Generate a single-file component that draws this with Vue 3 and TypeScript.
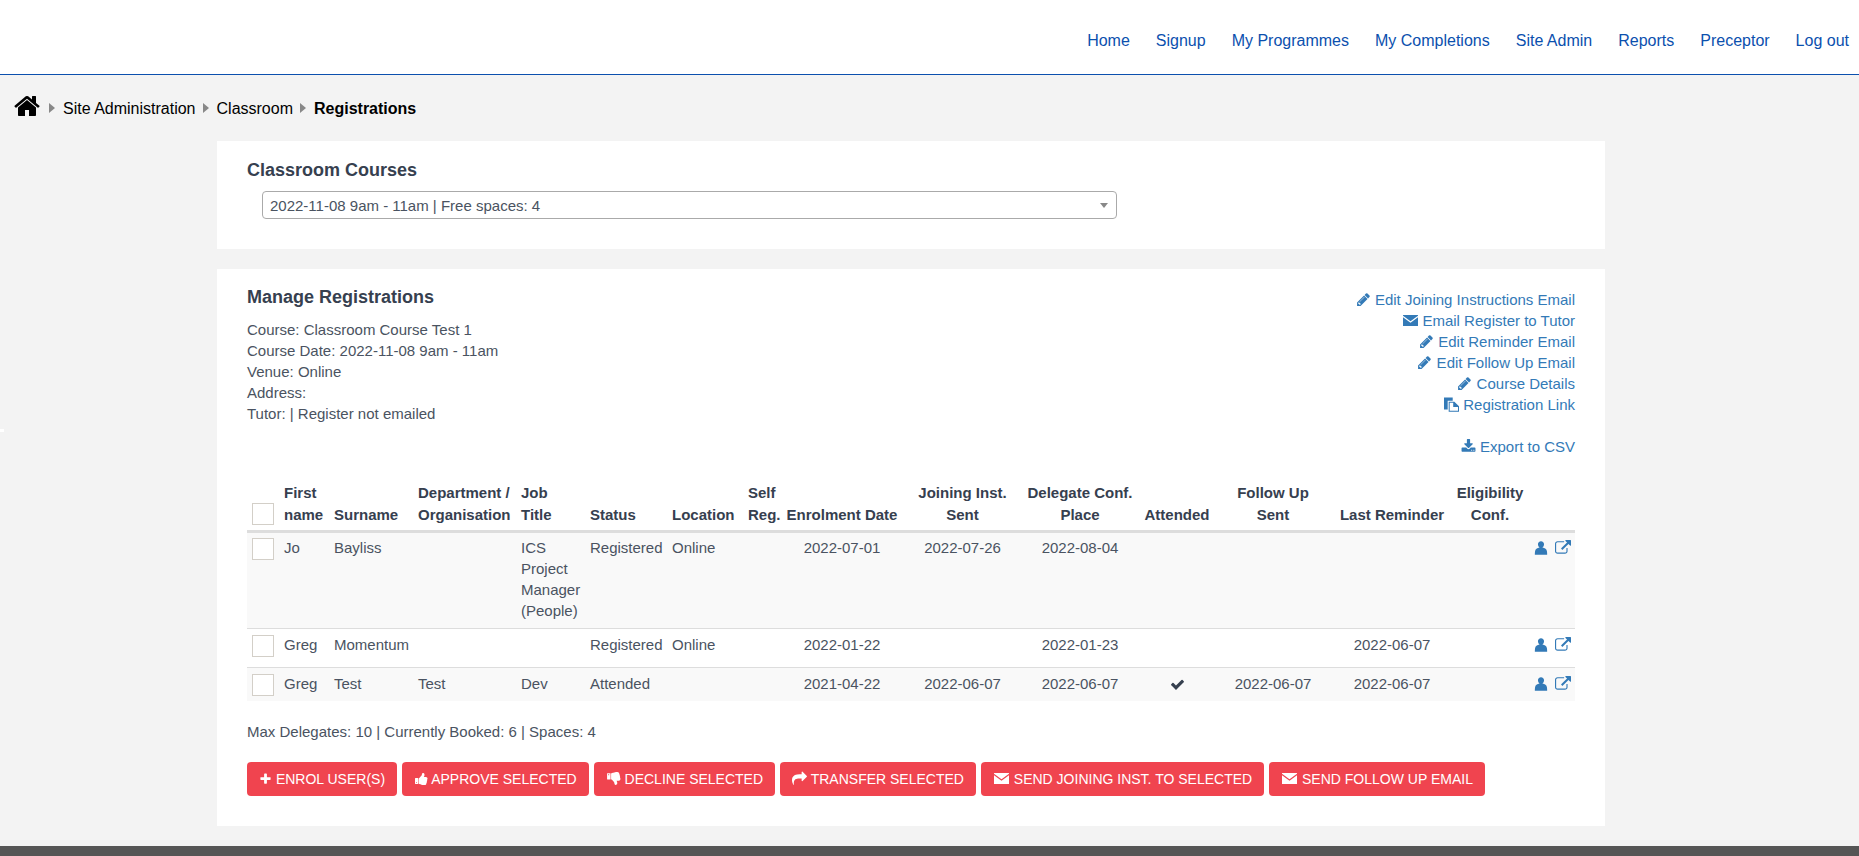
<script setup lang="ts">
interface Row {
  first: string
  surname: string
  dept: string
  job: string[]
  status: string
  location: string
  enrolled: string
  joining: string
  conf: string
  attended: boolean
  followUp: string
  reminder: string
}

const nav = ['Home', 'Signup', 'My Programmes', 'My Completions', 'Site Admin', 'Reports', 'Preceptor', 'Log out']

const icons: Record<string, string> = {
  pencil: 'M491 1536l91-91-235-235-91 91v107h128v128h107zm523-928q0-22-22-22-10 0-17 7l-542 542q-7 7-7 17 0 22 22 22 10 0 17-7l542-542q7-7 7-17zm-54-192l416 416-832 832h-416v-416zm683 96q0 53-37 90l-166 166-416-416 166-165q36-38 90-38 53 0 91 38l235 234q37 39 37 91z',
  envelope: 'M0 240H1792V340L896 980 0 340zM0 520L896 1160 1792 520V1560H0z',
  copy: 'M0 60H1040V440H440V1500H0zM560 560H1240L1792 1100V1760H560zM680 680V1640H1672V1200H1100V680z',
  download: 'M1344 1344q0-26-19-45t-45-19-45 19-19 45 19 45 45 19 45-19 19-45zm256 0q0-26-19-45t-45-19-45 19-19 45 19 45 45 19 45-19 19-45zm128-224v320q0 40-28 68t-68 28h-1472q-40 0-68-28t-28-68v-320q0-40 28-68t68-28h465l135 136q58 56 136 56t136-56l136-136h464q40 0 68 28t28 68zm-325-569q17 41-14 70l-448 448q-18 19-45 19t-45-19l-448-448q-31-29-14-70 17-39 59-39h256v-448q0-26 19-45t45-19h256q26 0 45 19t19 45v448h256q42 0 59 39z',
  plus: 'M1600 736v192q0 40-28 68t-68 28h-416v416q0 40-28 68t-68 28h-192q-40 0-68-28t-28-68v-416h-416q-40 0-68-28t-28-68v-192q0-40 28-68t68-28h416v-416q0-40 28-68t68-28h192q40 0 68 28t28 68v416h416q40 0 68 28t28 68z',
  up: 'M384 1344q0-26-19-45t-45-19-45 19-19 45 19 45 45 19 45-19 19-45zm160-512v640q0 26-19 45t-45 19h-288q-26 0-45-19t-19-45v-640q0-26 19-45t45-19h288q26 0 45 19t19 45zm1184 0q0 86-55 149 15 44 15 76 3 76-43 137 17 56 0 117-15 57-54 94 9 112-49 181-64 76-197 78h-129q-66 0-144-15.5t-121.5-29-120.5-39.5q-123-43-158-44-26-1-45-19.5t-19-44.5v-641q0-25 18-43.5t43-20.5q24-2 76-59t101-121q68-87 101-120 18-18 31-48t17.5-48.5 13.5-60.5q7-39 12.5-61t19.5-52 34-50q19-19 45-19 46 0 82.5 10.5t60 26 40 40.5 24 45 12 50 5 45 .5 39q0 38-9.5 76t-19 60-27.5 56q-3 6-10 18t-11 22-8 24h277q78 0 135 57t57 135z',
  down: 'M384 448q0 26-19 45t-45 19-45-19-19-45 19-45 45-19 45 19 19 45zm160 512v-640q0-26-19-45t-45-19h-288q-26 0-45 19t-19 45v640q0 26 19 45t45 19h288q26 0 45-19t19-45zm1129-149q55 61 55 149-1 78-57.5 135t-134.5 57h-277q4 14 8 24t11 22 10 18q18 37 27 57t19 58.5 10 76.5q0 24-.5 39t-5 45-12 50-24 45-40 40.5-60 26-82.5 10.5q-26 0-45-19-20-20-34-50t-19.5-52-12.5-61q-9-42-13.5-60.5t-17.5-48.5-31-48q-33-33-101-120-49-64-101-121t-76-59q-25-2-43-20.5t-18-43.5v-641q0-26 19-44.5t45-19.5q35-1 158-44 77-26 120.5-39.5t121.5-29 144-15.5h129q133 2 197 78 58 69 49 181 39 37 54 94 17 61 0 117 46 61 43 137 0 32-15 76z',
  share: 'M1792 640q0 26-19 45l-512 512q-19 19-45 19t-45-19-19-45v-256h-224q-98 0-175.5 6t-154 21.5-133 42.5-105.5 69.5-80 101-48.5 138.5-17.5 181q0 55 5 123 0 6 2.5 23.5t2.5 26.5q0 15-8.5 25t-23.5 10q-16 0-28-17-7-9-13-22t-13.5-30-10.5-24q-127-285-127-451 0-199 53-333 162-403 875-403h224v-256q0-26 19-45t45-19 45 19l512 512q19 19 19 45z',
  user: 'M896 130c200 0 340 150 340 340 0 160-80 300-190 370 300 30 480 180 520 440 16 110 20 260 20 384H206c0-124 4-274 20-384 40-260 220-410 520-440-110-70-190-210-190-370 0-190 140-340 340-340z',
  external: 'M1408 928v320q0 119-84.5 203.5t-203.5 84.5h-832q-119 0-203.5-84.5t-84.5-203.5v-832q0-119 84.5-203.5t203.5-84.5h704q14 0 23 9t9 23v64q0 14-9 23t-23 9h-704q-66 0-113 47t-47 113v832q0 66 47 113t113 47h832q66 0 113-47t47-113v-320q0-14 9-23t23-9h64q14 0 23 9t9 23zm384-864v512q0 26-19 45t-45 19-45-19l-176-176-652 652q-10 10-23 10t-23-10l-114-114q-10-10-10-23t10-23l652-652-176-176q-19-19-19-45t19-45 45-19h512q26 0 45 19t19 45z',
  check: 'M1671 566q0 40-28 68l-724 724-136 136q-28 28-68 28t-68-28l-136-136-362-362q-28-28-28-68t28-68l136-136q28-28 68-28t68 28l294 295 656-657q28-28 68-28t68 28l136 136q28 28 28 68z',
}

const links = [
  { icon: 'pencil', label: 'Edit Joining Instructions Email' },
  { icon: 'envelope', label: 'Email Register to Tutor' },
  { icon: 'pencil', label: 'Edit Reminder Email' },
  { icon: 'pencil', label: 'Edit Follow Up Email' },
  { icon: 'pencil', label: 'Course Details' },
  { icon: 'copy', label: 'Registration Link' },
]

const columns = [
  { lines: ['First', 'name'], width: 50 },
  { lines: ['Surname'], width: 84 },
  { lines: ['Department /', 'Organisation'], width: 103 },
  { lines: ['Job', 'Title'], width: 69 },
  { lines: ['Status'], width: 82 },
  { lines: ['Location'], width: 76 },
  { lines: ['Self', 'Reg.'], width: 34 },
  { lines: ['Enrolment Date'], width: 120, center: true },
  { lines: ['Joining Inst.', 'Sent'], width: 121, center: true },
  { lines: ['Delegate Conf.', 'Place'], width: 114, center: true },
  { lines: ['Attended'], width: 80, center: true },
  { lines: ['Follow Up', 'Sent'], width: 112, center: true },
  { lines: ['Last Reminder'], width: 126, center: true },
  { lines: ['Eligibility', 'Conf.'], width: 70, center: true },
]

const rows: Row[] = [
  { first: 'Jo', surname: 'Bayliss', dept: '', job: ['ICS', 'Project', 'Manager', '(People)'], status: 'Registered', location: 'Online', enrolled: '2022-07-01', joining: '2022-07-26', conf: '2022-08-04', attended: false, followUp: '', reminder: '' },
  { first: 'Greg', surname: 'Momentum', dept: '', job: [], status: 'Registered', location: 'Online', enrolled: '2022-01-22', joining: '', conf: '2022-01-23', attended: false, followUp: '', reminder: '2022-06-07' },
  { first: 'Greg', surname: 'Test', dept: 'Test', job: ['Dev'], status: 'Attended', location: '', enrolled: '2021-04-22', joining: '2022-06-07', conf: '2022-06-07', attended: true, followUp: '2022-06-07', reminder: '2022-06-07' },
]

const actions = [
  { icon: 'plus', label: 'ENROL USER(S)' },
  { icon: 'up', label: 'APPROVE SELECTED' },
  { icon: 'down', label: 'DECLINE SELECTED' },
  { icon: 'share', label: 'TRANSFER SELECTED' },
  { icon: 'envelope', label: 'SEND JOINING INST. TO SELECTED' },
  { icon: 'envelope', label: 'SEND FOLLOW UP EMAIL' },
]
</script>

<template>
  <div class="page">
    <header class="topbar">
      <nav class="nav">
        <a v-for="item in nav" :key="item">{{ item }}</a>
      </nav>
    </header>

    <div class="crumbs">
      <svg class="home" viewBox="0 0 1792 1792"><path d="M1472 992v480q0 26-19 45t-45 19h-384v-384h-256v384h-384q-26 0-45-19t-19-45v-480q0-1 .5-3t.5-3l575-474 575 474q1 2 1 6zm223-69l-62 74q-8 9-21 11h-3q-13 0-21-7l-692-577-692 577q-12 8-24 7-13-2-21-11l-62-74q-8-10-7-23.5t11-21.5l719-599q32-26 76-26t76 26l244 204v-195q0-14 9-23t23-9h192q14 0 23 9t9 23v408l219 182q10 8 11 21.5t-7 23.5z" /></svg>
      <span class="arrow"></span>
      <span>Site Administration</span>
      <span class="arrow"></span>
      <span>Classroom</span>
      <span class="arrow"></span>
      <b>Registrations</b>
    </div>

    <main class="content">
      <section class="card courses">
        <h2>Classroom Courses</h2>
        <div class="select">
          <span>2022-11-08 9am - 11am | Free spaces: 4</span>
          <i class="caret"></i>
        </div>
      </section>

      <section class="card manage">
        <div class="summary">
          <div class="details">
            <h2>Manage Registrations</h2>
            <div>Course: Classroom Course Test 1</div>
            <div>Course Date: 2022-11-08 9am - 11am</div>
            <div>Venue: Online</div>
            <div>Address:</div>
            <div>Tutor: | Register not emailed</div>
          </div>
          <div class="links">
            <a v-for="link in links" :key="link.label">
              <svg class="icon" viewBox="0 0 1792 1792"><path :d="icons[link.icon]" fill-rule="evenodd" /></svg>
              {{ link.label }}
            </a>
            <a class="export">
              <svg class="icon" viewBox="0 0 1792 1792"><path :d="icons.download" /></svg>
              Export to CSV
            </a>
          </div>
        </div>

        <table class="grid">
          <colgroup>
            <col class="col-check" />
            <col v-for="col in columns" :key="col.lines.join()" :style="{ width: col.width + 'px' }" />
            <col />
          </colgroup>
          <thead>
            <tr>
              <th><input type="checkbox" class="check" /></th>
              <th v-for="col in columns" :key="col.lines.join()" :class="{ center: col.center }">
                <div v-for="line in col.lines" :key="line">{{ line }}</div>
              </th>
              <th></th>
            </tr>
          </thead>
          <tbody>
            <tr v-for="(row, i) in rows" :key="i">
              <td><input type="checkbox" class="check" /></td>
              <td>{{ row.first }}</td>
              <td>{{ row.surname }}</td>
              <td>{{ row.dept }}</td>
              <td><div v-for="line in row.job" :key="line">{{ line }}</div></td>
              <td>{{ row.status }}</td>
              <td>{{ row.location }}</td>
              <td></td>
              <td class="center">{{ row.enrolled }}</td>
              <td class="center">{{ row.joining }}</td>
              <td class="center">{{ row.conf }}</td>
              <td class="center">
                <svg v-if="row.attended" class="tick" viewBox="0 0 1792 1792"><path :d="icons.check" /></svg>
              </td>
              <td class="center">{{ row.followUp }}</td>
              <td class="center">{{ row.reminder }}</td>
              <td></td>
              <td class="row-icons">
                <svg class="icon" viewBox="0 0 1792 1792"><path :d="icons.user" /></svg>
                <svg class="icon" viewBox="0 0 1792 1792"><path :d="icons.external" /></svg>
              </td>
            </tr>
          </tbody>
        </table>

        <p class="counts">Max Delegates: 10 | Currently Booked: 6 | Spaces: 4</p>

        <div class="actions">
          <button v-for="action in actions" :key="action.label" type="button">
            <svg class="btn-icon" :class="'i-' + action.icon" viewBox="0 0 1792 1792"><path :d="icons[action.icon]" fill-rule="evenodd" /></svg>
            {{ action.label }}
          </button>
        </div>
      </section>
    </main>

    <footer class="footer"></footer>
    <div class="edge-mark"></div>
  </div>
</template>

<style>
html,
body {
  margin: 0;
  background: #f3f3f3;
}
</style>

<style scoped>
.page {
  position: relative;
  height: 856px;
  overflow: hidden;
  display: flex;
  flex-direction: column;
  background: #f3f3f3;
  font-family: 'Liberation Sans', Arial, sans-serif;
  font-size: 15px;
  line-height: 21px;
  color: #4a5361;
}

.topbar {
  height: 75px;
  flex: none;
  box-sizing: border-box;
  background: #fff;
  border-bottom: 1px solid #0b50ae;
  display: flex;
  justify-content: flex-end;
  align-items: center;
  padding-top: 6px;
}

.nav {
  display: flex;
  gap: 26px;
  padding-right: 10px;
  font-size: 16px;
  color: #0b50ae;
}

.crumbs {
  display: flex;
  align-items: center;
  height: 66px;
  flex: none;
  padding-left: 13px;
  font-size: 16px;
  color: #000;
}

.home {
  width: 28px;
  height: 28px;
  margin-right: 1px;
  margin-top: -4px;
}

.arrow {
  width: 0;
  height: 0;
  margin: 0 8px 0 7px;
  border-left: 6px solid #888;
  border-top: 5px solid transparent;
  border-bottom: 5px solid transparent;
}

.content {
  flex: 1;
  width: 1388px;
  margin-left: 217px;
}

.card {
  background: #fff;
  padding: 0 30px;
  box-sizing: border-box;
}

h2 {
  margin: 0;
  font-size: 18px;
  line-height: 24px;
  font-weight: bold;
  color: #36404f;
}

.courses {
  height: 108px;
  padding-top: 17px;
  margin-bottom: 20px;
}

.select {
  width: 855px;
  height: 28px;
  margin: 9px 0 0 15px;
  padding: 0 8px 0 7px;
  box-sizing: border-box;
  display: flex;
  align-items: center;
  justify-content: space-between;
  border: 1px solid #aaa;
  border-radius: 4px;
}

.caret {
  border-top: 5px solid #888;
  border-left: 4px solid transparent;
  border-right: 4px solid transparent;
}

.manage {
  height: 557px;
  padding-top: 16px;
}

.summary {
  display: flex;
  justify-content: space-between;
  height: 197px;
}

.details h2 {
  margin-bottom: 10px;
}

.links {
  display: flex;
  flex-direction: column;
  align-items: flex-end;
  padding-top: 4px;
  color: #337ab7;
}

.export {
  margin-top: 21px;
}

.icon {
  width: 15px;
  height: 15px;
  fill: #337ab7;
  vertical-align: -2px;
}

.grid {
  width: 1328px;
  table-layout: fixed;
  border-collapse: collapse;
}

.col-check {
  width: 37px;
}

th {
  padding: 0 0 4px 0;
  font-weight: bold;
  line-height: 22px;
  text-align: left;
  vertical-align: bottom;
  color: #36404f;
  border-bottom: 3px solid #ddd;
}

td {
  padding: 5px 0 6px;
  vertical-align: top;
  border-top: 1px solid #ddd;
}

tbody tr:first-child td {
  padding-top: 4px;
  padding-bottom: 7px;
  border-top: none;
}

tbody tr:nth-child(odd) {
  background: #f9f9f9;
}

tbody tr:nth-child(2) td {
  padding-bottom: 10px;
}

tbody tr:nth-child(3) td {
  padding-bottom: 5px;
}

.center {
  text-align: center;
}

.check {
  appearance: none;
  display: block;
  width: 22px;
  height: 22px;
  margin: 1px 0 0 5px;
  box-sizing: border-box;
  border: 1px solid #d3cfc8;
  background: #fff;
}

th .check {
  margin-top: 0;
  margin-bottom: 1px;
}

.tick {
  width: 15px;
  height: 15px;
  fill: #36404f;
  vertical-align: -3px;
}

td.row-icons {
  white-space: nowrap;
  text-align: right;
  padding-right: 4px;
}

.row-icons .icon {
  width: 16px;
  height: 16px;
  margin-left: 6px;
  vertical-align: -3px;
}

.counts {
  margin: 20px 0;
}

.actions {
  display: flex;
  gap: 5px;
}

button {
  height: 34px;
  padding: 0 12px;
  border: none;
  border-radius: 4px;
  background: #f0444f;
  color: #fff;
  font-family: inherit;
  font-size: 14px;
  white-space: nowrap;
}

.btn-icon {
  width: 14px;
  height: 14px;
  fill: #fff;
  vertical-align: -2px;
}

.i-plus {
  width: 13px;
}

.i-down,
.i-share {
  width: 15px;
  height: 15px;
}

.i-envelope {
  width: 17px;
  height: 15px;
}

.footer {
  height: 10px;
  flex: none;
  background: #555;
}

/* small white chip on the left edge of the page */
.edge-mark {
  position: absolute;
  left: 0;
  top: 429px;
  width: 4px;
  height: 3px;
  background: #fff;
}
</style>
